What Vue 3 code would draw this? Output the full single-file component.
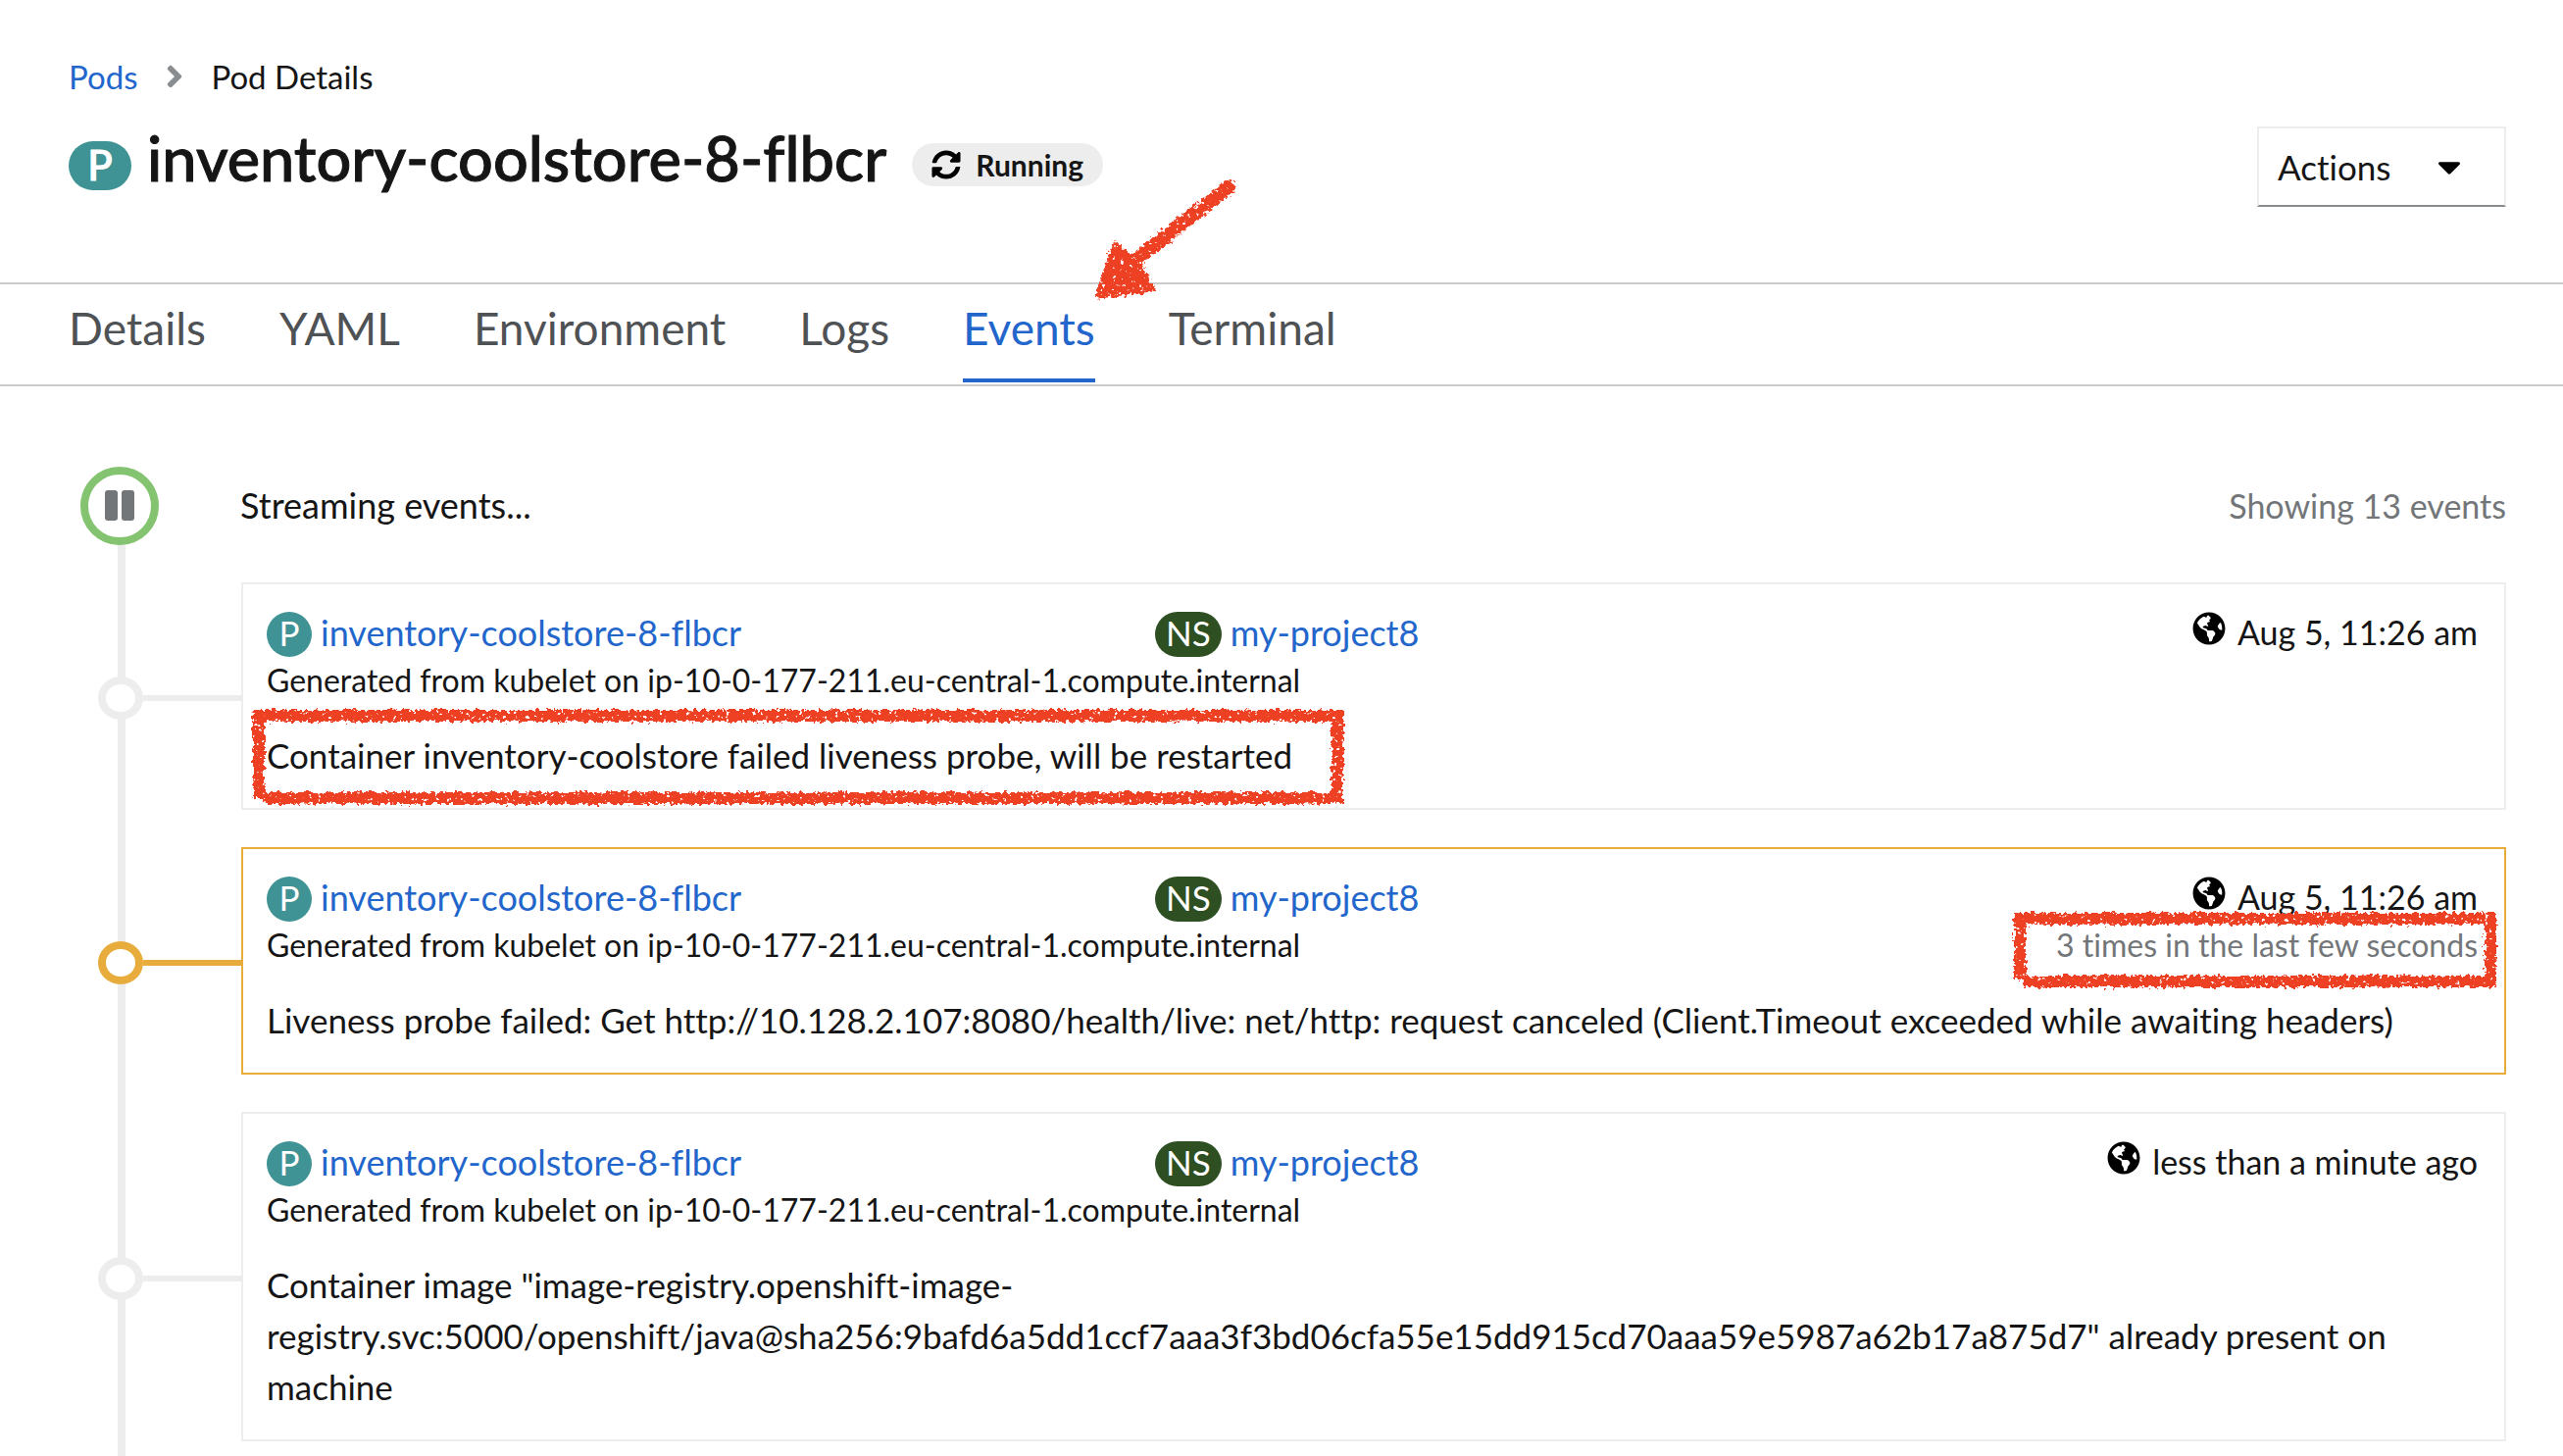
<script setup>
import { ref } from 'vue'

const tabs = ['Details', 'YAML', 'Environment', 'Logs', 'Events', 'Terminal']
const active = ref('Events')

const source = 'Generated from kubelet on ip-10-0-177-211.eu-central-1.compute.internal'
const events = [
  {
    time: 'Aug 5, 11:26 am',
    message: 'Container inventory-coolstore failed liveness probe, will be restarted',
    markMessage: true
  },
  {
    time: 'Aug 5, 11:26 am',
    count: '3 times in the last few seconds',
    message:
      'Liveness probe failed: Get http://10.128.2.107:8080/health/live: net/http: request canceled (Client.Timeout exceeded while awaiting headers)',
    warning: true
  },
  {
    time: 'less than a minute ago',
    message:
      'Container image "image-registry.openshift-image-registry.svc:5000/openshift/java@sha256:9bafd6a5dd1ccf7aaa3f3bd06cfa55e15dd915cd70aaa59e5987a62b17a875d7" already present on machine'
  }
]
</script>

<template>
  <div class="page">
    <svg class="defs" width="0" height="0" aria-hidden="true">
      <filter id="crayon" x="-10%" y="-20%" width="120%" height="140%">
        <feTurbulence type="fractalNoise" baseFrequency="0.25" numOctaves="3" seed="4" result="noise" />
        <feDisplacementMap in="SourceGraphic" in2="noise" scale="9" xChannelSelector="R" yChannelSelector="G" result="rough" />
        <feColorMatrix in="noise" type="matrix" values="0 0 0 0 0  0 0 0 0 0  0 0 0 0 0  0 0 12 0 -3" result="grain" />
        <feComposite in="rough" in2="grain" operator="in" />
      </filter>
    </svg>

    <header class="head">
      <nav class="crumbs" aria-label="Breadcrumb">
        <a href="#">Pods</a>
        <svg class="chevron" viewBox="0 0 256 512" aria-hidden="true">
          <path d="M224.3 273l-136 136c-9.4 9.4-24.6 9.4-33.9 0l-22.6-22.6c-9.4-9.4-9.4-24.6 0-33.9l96.4-96.4-96.4-96.4c-9.4-9.4-9.4-24.6 0-33.9L54.3 103c9.4-9.4 24.6-9.4 33.9 0l136 136c9.5 9.4 9.5 24.6.1 34z" />
        </svg>
        <span>Pod Details</span>
      </nav>
      <div class="title-row">
        <span class="badge badge-lg">P</span>
        <h1>inventory-coolstore-8-flbcr</h1>
        <span class="status">
          <svg viewBox="0 0 512 512" aria-hidden="true">
            <path d="M370.72 133.28C339.458 104.008 298.888 87.962 255.848 88c-77.458.068-144.328 53.178-162.791 126.85-1.344 5.363-6.122 9.15-11.651 9.15H24.103c-7.498 0-13.194-6.807-11.807-14.176C33.933 94.924 134.813 8 256 8c66.448 0 126.791 26.136 171.315 68.685L463.03 40.97C478.149 25.851 504 36.559 504 57.941V192c0 13.255-10.745 24-24 24H345.941c-21.382 0-32.09-25.851-16.971-40.971l41.75-41.749zM32 296h134.059c21.382 0 32.09 25.851 16.971 40.971l-41.75 41.75c31.262 29.273 71.835 45.319 114.876 45.28 77.418-.07 144.315-53.144 162.787-126.849 1.344-5.363 6.122-9.15 11.651-9.15h57.304c7.498 0 13.194 6.807 11.807 14.176C478.067 417.076 377.187 504 256 504c-66.448 0-126.791-26.136-171.315-68.685L48.97 471.03C33.851 486.149 8 475.441 8 454.059V320c0-13.255 10.745-24 24-24z" />
          </svg>
          Running
        </span>
        <button class="actions" type="button">
          Actions
          <svg viewBox="0 0 320 512" aria-hidden="true">
            <path d="M31.3 192h257.3c17.8 0 26.7 21.5 14.1 34.1L174.1 354.7c-7.8 7.8-20.5 7.8-28.3 0L17.2 226.1C4.6 213.5 13.5 192 31.3 192z" />
          </svg>
        </button>
      </div>
    </header>

    <nav class="tabs" aria-label="Pod sections">
      <a
        v-for="tab in tabs"
        :key="tab"
        href="#"
        :class="{ active: tab === active }"
        @click.prevent="active = tab"
      >
        {{ tab }}
        <svg v-if="tab === 'Events'" class="arrow" viewBox="0 0 150 130" aria-hidden="true">
          <g filter="url(#crayon)">
            <path d="M138 13L40 89" fill="none" stroke="#ee4024" stroke-width="14" stroke-linecap="round" />
            <path d="M22 70L5 124L60 117L48 94L34 82Z" fill="#ee4024" stroke="#ee4024" stroke-width="5" stroke-linejoin="round" />
          </g>
        </svg>
      </a>
    </nav>

    <main class="stream">
      <div class="stream-head">
        <button class="pause" type="button" aria-label="Pause event streaming">
          <svg viewBox="0 0 32 32" aria-hidden="true">
            <rect x="1" y="0" width="13" height="31" rx="3" />
            <rect x="18" y="0" width="13" height="31" rx="3" />
          </svg>
        </button>
        <span class="state">Streaming events...</span>
        <span class="total">Showing 13 events</span>
      </div>

      <article v-for="(e, i) in events" :key="i" class="event" :class="{ warning: e.warning }">
        <div class="rail"><i class="node"></i><i class="link"></i></div>
        <div class="card">
          <div class="line">
            <div class="pod">
              <span class="badge">P</span>
              <a href="#">inventory-coolstore-8-flbcr</a>
            </div>
            <div class="ns">
              <span class="badge badge-ns">NS</span>
              <a href="#">my-project8</a>
            </div>
            <div class="time">
              <svg viewBox="0 0 496 512" aria-hidden="true">
                <path d="M248 8C111.03 8 0 119.03 0 256s111.03 248 248 248 248-111.03 248-248S384.97 8 248 8zm82.29 357.6c-3.9 3.88-7.99 7.95-11.31 11.28-2.99 3-5.1 6.7-6.17 10.71-1.51 5.66-2.73 11.38-4.77 16.87l-17.39 46.85c-13.76 3-28 4.69-42.65 4.69v-27.38c1.69-12.62-7.64-36.26-22.63-51.25-6-6-9.37-14.14-9.37-22.63v-32.01c0-11.64-6.27-22.34-16.46-27.97-14.37-7.95-34.81-19.06-48.81-26.11-11.48-5.78-22.1-13.14-31.65-21.75l-.8-.72a114.792 114.792 0 0 1-18.06-20.74c-9.38-13.77-24.66-36.42-34.59-51.14 20.47-45.5 57.36-82.04 103.2-101.89l24.01 12.01C203.48 89.74 216 82.01 216 70.11v-11.3c7.99-1.29 16.12-2.11 24.39-2.42l28.3 28.3c6.25 6.25 6.25 16.38 0 22.63L264 112l-10.34 10.34c-3.12 3.12-3.12 8.19 0 11.31l4.69 4.69c3.12 3.12 3.12 8.19 0 11.31l-8 8a8.008 8.008 0 0 1-5.66 2.34h-8.99c-2.08 0-4.08.81-5.58 2.27l-9.92 9.65a8.008 8.008 0 0 0-1.58 9.31l15.59 31.19c2.66 5.32-1.21 11.58-7.15 11.58h-5.64c-1.93 0-3.79-.7-5.24-1.96l-9.28-8.06a16.017 16.017 0 0 0-15.55-3.1l-31.17 10.39a11.95 11.95 0 0 0-8.17 11.34c0 4.53 2.56 8.66 6.61 10.69l11.08 5.54c9.41 4.71 19.79 7.16 30.31 7.16s22.59 27.29 32 32h66.75c8.49 0 16.62 3.37 22.63 9.37l13.69 13.69a30.503 30.503 0 0 1 8.93 21.57 46.536 46.536 0 0 1-13.72 32.98zM417 274.25c-5.79-1.45-10.84-5-14.15-9.97l-17.98-26.97a23.97 23.97 0 0 1 0-26.62l19.59-29.38c2.32-3.47 5.5-6.29 9.24-8.15l12.98-6.49C440.2 193.59 448 223.87 448 256c0 8.67-.74 17.16-1.82 25.54L417 274.25z" />
              </svg>
              {{ e.time }}
            </div>
          </div>
          <div class="source">
            <span>{{ source }}</span>
            <span v-if="e.count" class="count">{{ e.count }}</span>
          </div>
          <p class="message">{{ e.message }}</p>

          <svg v-if="e.markMessage" class="mark mark-message" viewBox="0 0 1132 116" aria-hidden="true">
            <path d="M16 100V16H1116V100H20" filter="url(#crayon)" />
          </svg>
          <svg v-if="e.count" class="mark mark-count" viewBox="0 0 514 96" aria-hidden="true">
            <path d="M18 78V16H498V80H22" filter="url(#crayon)" />
          </svg>
        </div>
      </article>
    </main>
  </div>
</template>

<style>
body {
  margin: 0;
  background: #fff;
}
</style>

<style scoped>
.page {
  display: flex;
  flex-direction: column;
  min-height: 100vh;
  font-family: Lato, "Open Sans", sans-serif;
  font-size: 35px;
  font-variant-ligatures: none;
  color: #151515;
}
.page * {
  box-sizing: border-box;
}
.defs {
  position: absolute;
}
a {
  color: #2266cc;
  text-decoration: none;
}

.head {
  padding: 54px 58px 90px 70px;
}
.crumbs {
  display: flex;
  align-items: center;
  font-size: 33px;
  line-height: 48px;
}
.chevron {
  width: 18px;
  height: 36px;
  margin: 0 28px 0 29px;
  fill: #8a8d90;
}
.title-row {
  display: flex;
  align-items: center;
  height: 72px;
  margin-top: 24px;
}
h1 {
  margin: 0 26px 0 16px;
  padding-bottom: 2px;
  font-size: 63px;
  font-weight: 500;
  line-height: 72px;
  -webkit-text-stroke: 1px currentColor;
}
.badge {
  flex: none;
  min-width: 46px;
  height: 46px;
  padding: 0 11px;
  border-radius: 23px;
  background: #3f9394;
  color: #fff;
  line-height: 42px;
  text-align: center;
}
.badge-lg {
  width: 64px;
  height: 50px;
  margin-top: 14px;
  border-radius: 25px;
  font-size: 42px;
  font-weight: 500;
  line-height: 48px;
  -webkit-text-stroke: 1px currentColor;
}
.badge-ns {
  background: #2d4f22;
}
.status {
  display: flex;
  align-items: center;
  gap: 15px;
  height: 44px;
  margin-top: 12px;
  padding: 0 20px;
  border-radius: 22px;
  background: #ededed;
  font-size: 30px;
  font-weight: 700;
  line-height: 40px;
}
.status svg {
  width: 30px;
  height: 30px;
}
.actions {
  display: flex;
  align-items: center;
  justify-content: space-between;
  width: 254px;
  height: 82px;
  margin: 16px 0 0 auto;
  padding: 0 44px 0 19px;
  border: 2px solid #ededed;
  border-bottom-color: #8a8d90;
  background: #fff;
  color: #151515;
  font: inherit;
}
.actions svg {
  width: 24px;
  height: 38px;
}

.tabs {
  display: flex;
  gap: 75px;
  padding: 0 70px 2px;
  border-top: 2px solid #ccc;
  border-bottom: 2px solid #ccc;
}
.tabs a {
  position: relative;
  padding: 15px 0 21px;
  border-bottom: 4px solid transparent;
  color: #4f5255;
  font-size: 46px;
  line-height: 60px;
}
.tabs a.active {
  border-bottom-color: #2266cc;
  color: #2266cc;
}
.arrow {
  position: absolute;
  right: -148px;
  top: -112px;
  width: 150px;
  height: 130px;
  pointer-events: none;
}

.stream {
  position: relative;
  flex: 1;
  padding: 82px 58px 15px 70px;
}
.stream::before {
  content: "";
  position: absolute;
  top: 122px;
  bottom: 0;
  left: 120px;
  width: 8px;
  background: #ededed;
}
.stream-head {
  position: relative;
  display: flex;
  align-items: center;
}
.pause {
  display: flex;
  align-items: center;
  justify-content: center;
  width: 80px;
  height: 80px;
  margin: 0 83px 0 12px;
  padding: 0;
  border: 8px solid #84c36f;
  border-radius: 50%;
  background: #fff;
}
.pause svg {
  width: 32px;
  height: 32px;
  fill: #737679;
}
.state,
.total {
  padding-bottom: 2px;
}
.state {
  font-size: 36px;
}
.total {
  margin-left: auto;
  color: #737679;
  font-size: 34px;
}

.event {
  position: relative;
  display: flex;
  margin-top: 38px;
}
.rail {
  display: flex;
  align-items: center;
  flex: 0 0 176px;
  padding: 4px 0 0 30px;
}
.node {
  width: 46px;
  height: 44px;
  border: 8px solid #ededed;
  border-radius: 50%;
  background: #fff;
}
.link {
  flex: 1;
  height: 6px;
  background: #ededed;
}
.card {
  position: relative;
  flex: 1;
  min-width: 0;
  padding: 28px 27px 28px 24px;
  border: 2px solid #ededed;
}
.warning .node,
.warning .card {
  border-color: #e7ac3c;
}
.warning .link {
  background: #e7ac3c;
}
.line {
  display: flex;
  gap: 4px;
  height: 46px;
  line-height: 42px;
}
.line a {
  font-size: 36px;
}
.pod {
  display: flex;
  flex: 0 0 40%;
  gap: 9px;
}
.ns {
  display: flex;
  gap: 9px;
}
.time {
  display: flex;
  gap: 12px;
  margin-left: auto;
  font-size: 34px;
}
.time svg {
  width: 34px;
  height: 34px;
}
.source {
  display: flex;
  justify-content: space-between;
  font-size: 32px;
  line-height: 48px;
}
.count {
  color: #737679;
}
.message {
  margin: 26px 0 0;
  line-height: 52px;
  overflow-wrap: break-word;
}
.mark {
  position: absolute;
  pointer-events: none;
}
.mark path {
  fill: none;
  stroke: #ee4024;
  stroke-width: 12px;
}
.mark-message {
  left: 0;
  top: 118px;
  width: 1132px;
  height: 116px;
}
.mark-count {
  right: -2px;
  top: 55px;
  width: 514px;
  height: 96px;
}
</style>
